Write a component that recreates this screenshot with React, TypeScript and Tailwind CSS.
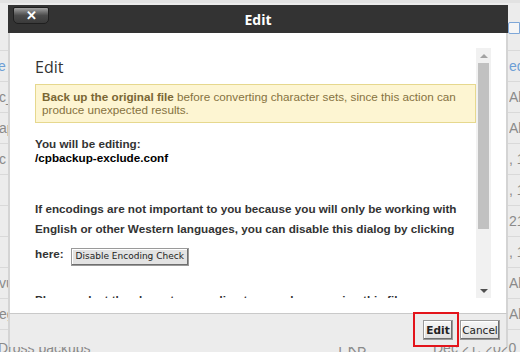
import React from 'react';

const rows = [
  { left: 'e', right: 'ed', link: true },
  { left: 'c_', right: 'All' },
  { left: 'ap', right: 'All' },
  { left: 'c', right: ', 1' },
  { left: '', right: ', 1' },
  { left: '', right: '21,' },
  { left: '', right: ', 1' },
  { left: 'vu', right: 'All' },
  { left: 'eg', right: 'All' },
];

function PageBehind() {
  return (
    <div className="flex flex-col text-[14px] text-[#8a8a8a]">
      <div className="h-[50px] border-t-[3px] border-[#e2e2e2] bg-[#ececec] flex justify-end">
        <div className="mt-[19px] w-[12px] h-[12px] border border-[#7ea7d8] bg-[#f5f5f5] rounded-l-[2px]" />
      </div>
      {rows.map((r, i) => (
        <div key={i} className="h-[31px] border-t border-[#d9d9d9] bg-[#ececec] flex items-center justify-between">
          <span className={r.link ? 'text-[#6d9fd6] -ml-[2px]' : '-ml-[1px]'}>{r.left}</span>
          <span
            className={
              r.link
                ? 'w-[11px] overflow-hidden whitespace-nowrap text-[#6d9fd6]'
                : 'w-[11px] overflow-hidden whitespace-nowrap'
            }
          >
            {r.right}
          </span>
        </div>
      ))}
      <div className="h-[31px] border-t border-[#d9d9d9] bg-[#ececec] flex items-center pt-[6px] whitespace-nowrap">
        <span className="w-[338px] -ml-[2px]">Dross backups</span>
        <span className="w-[97px]">1 KB</span>
        <span>Dec 21, 2020</span>
      </div>
    </div>
  );
}

// drawn classic scrollbar next to the clipped content
function ScrollBar() {
  return (
    <div className="w-[15px] shrink-0 bg-[#f1f1f1] flex flex-col">
      <div className="h-[15px] flex items-center justify-center">
        <div className="w-0 h-0 border-x-[4px] border-x-transparent border-b-[4px] border-b-[#a3a3a3]" />
      </div>
      <div className="mx-[2px] h-[166px] bg-[#c1c1c1]" />
      <div className="flex-1" />
      <div className="h-[15px] flex items-center justify-center">
        <div className="w-0 h-0 border-x-[4px] border-x-transparent border-t-[4px] border-t-[#505050]" />
      </div>
    </div>
  );
}

const btn =
  'bg-gradient-to-b from-[#f7f7f7] to-[#dedede] border border-[#9a9a9a] shadow-[inset_-1px_-1px_0_#6f6f6f,inset_1px_1px_0_#ffffff] leading-none';

function EditDialog() {
  return (
    <div className="absolute left-[8px] top-[5px] w-[500px] flex flex-col">
      <div className="relative h-[28px] bg-[#333333] flex items-center justify-center">
        <button className="absolute left-[5px] top-[2px] w-[36px] h-[17px] rounded-b-[5px] rounded-t-[2px] border border-[#1f1f1f] bg-gradient-to-b from-[#a3a3a3] via-[#4b4b4b] to-[#3a3a3a] text-white text-[13px] font-bold leading-none flex items-center justify-center">
          ✕
        </button>
        <span className="text-white text-[14px] font-bold font-['Open_Sans',sans-serif]">Edit</span>
      </div>

      <div className="h-[280px] bg-white border-x-2 border-[#d4d4d4] pt-[15px] pl-[17px] pr-[15px]">
        <div className="h-[250px] flex">
          <div className="flex-1 overflow-hidden pl-[8px] pt-[8px] text-[11.7px] text-[#333]">
            <h2 className="text-[16px] leading-[22px] text-[#333] font-['Open_Sans',sans-serif]">Edit</h2>
            <div className="mt-[6px] border border-[#e6d88e] bg-[#fdf5d2] px-[6px] py-[5px] leading-[13.4px] text-[#86723f]">
              <b className="text-[#7a6734]">Back up the original file</b> before converting character sets, since this action can produce unexpected results.
            </div>
            <div className="mt-[14px] font-bold leading-[14.5px]">
              <div>You will be editing:</div>
              <div className="text-black">/cpbackup-exclude.conf</div>
            </div>
            <div className="mt-[33px] font-bold leading-[20px] whitespace-nowrap">
              <div>If encodings are not important to you because you will only be working with</div>
              <div>English or other Western languages, you can disable this dialog by clicking</div>
              <div className="mt-[5px] flex items-start gap-[7px]">
                <span>here:</span>
                <button className="mt-[4px] h-[18px] px-[4px] bg-[#e3e3e3] border border-[#9a9a9a] shadow-[inset_-1px_-1px_0_#6f6f6f,inset_1px_1px_0_#ffffff] text-[9px] leading-none font-normal text-[#222] font-['DejaVu_Sans',sans-serif]">
                  Disable Encoding Check
                </button>
              </div>
            </div>
            <div className="mt-[24px] font-bold leading-[20px]">
              Please select the character encoding to use when opening this file:
            </div>
          </div>
          <ScrollBar />
        </div>
      </div>

      <div className="relative h-[34px] bg-[#ececec] border-t border-[#c9c9c9] border-x-2 border-x-[#d4d4d4] flex justify-end items-start gap-[7px] pt-[6px] pr-[6px] font-['DejaVu_Sans',sans-serif] text-[10.5px] text-[#222]">
        <button className={`w-[30px] h-[20px] font-bold ${btn}`}>Edit</button>
        <button className={`w-[40px] h-[20px] ${btn}`}>Cancel</button>
        <div className="absolute left-[403px] top-[-2px] w-[46px] h-[35px] border-2 border-[#e3141b]" />
      </div>
    </div>
  );
}

export default function App() {
  return (
    <div className="relative w-[520px] h-[352px] overflow-hidden bg-[#ececec] font-['Liberation_Sans',Arial,sans-serif]">
      <PageBehind />
      <EditDialog />
    </div>
  );
}
